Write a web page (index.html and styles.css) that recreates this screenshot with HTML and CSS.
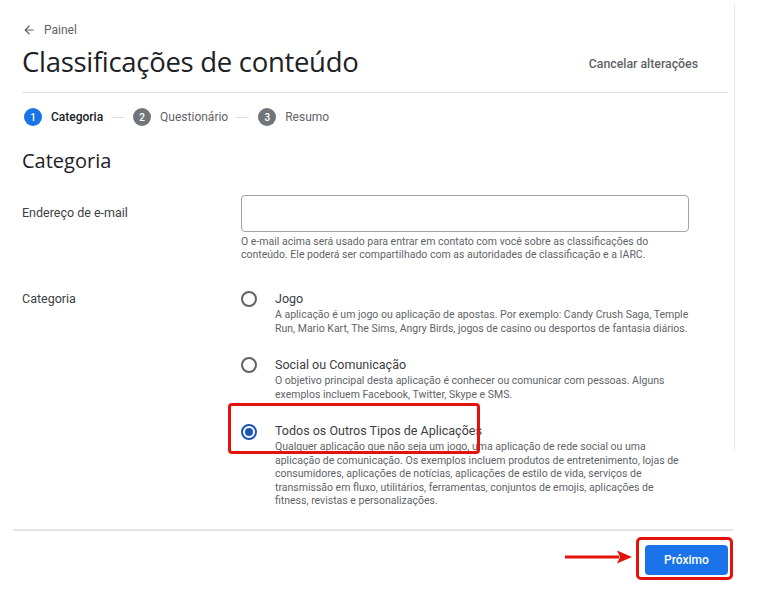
FILE: index.html
```html
<!DOCTYPE html>
<html lang="pt">
<head>
<meta charset="utf-8">
<title>Classificações de conteúdo</title>
<link rel="stylesheet" href="styles.css">
</head>
<body>
<div class="shell">
  <main class="main">
    <a class="back" href="#"><svg class="back-icon" width="14" height="14" viewBox="0 0 24 24"><path d="M20 11H7.830l5.59-5.59L12 4l-8 8 8 8 1.41-1.41L7.83 13H20v-2z" fill="#5f6368"/></svg><span>Painel</span></a>
    <header class="header">
      <h1 class="title">Classificações de conteúdo</h1>
      <button class="cancel">Cancelar alterações</button>
    </header>
    <ol class="stepper">
      <li class="step step-active"><span class="step-num">1</span><span class="step-label">Categoria</span></li>
      <li class="step-line"></li>
      <li class="step"><span class="step-num">2</span><span class="step-label">Questionário</span></li>
      <li class="step-line"></li>
      <li class="step"><span class="step-num">3</span><span class="step-label">Resumo</span></li>
    </ol>
    <h2 class="section-title">Categoria</h2>
    <div class="form-row">
      <div class="row-label row-label-center">Endereço de e-mail</div>
      <div class="row-field">
        <div class="input"></div>
        <p class="help">O e-mail acima será usado para entrar em contato com você sobre as classificações do conteúdo. Ele poderá ser compartilhado com as autoridades de classificação e a IARC.</p>
      </div>
    </div>
    <div class="form-row form-row-cat">
      <div class="row-label">Categoria</div>
      <div class="row-field options">
        <div class="option">
          <span class="radio"></span>
          <div class="option-text">
            <div class="option-title">Jogo</div>
            <div class="option-desc">A aplicação é um jogo ou aplicação de apostas. Por exemplo: Candy Crush Saga, Temple Run, Mario Kart, The Sims, Angry Birds, jogos de casino ou desportos de fantasia diários.</div>
          </div>
        </div>
        <div class="option">
          <span class="radio"></span>
          <div class="option-text">
            <div class="option-title">Social ou Comunicação</div>
            <div class="option-desc">O objetivo principal desta aplicação é conhecer ou comunicar com pessoas. Alguns exemplos incluem Facebook, Twitter, Skype e SMS.</div>
          </div>
        </div>
        <div class="option option-selected">
          <span class="radio radio-on"><span class="radio-dot"></span></span>
          <div class="option-text">
            <div class="option-title">Todos os Outros Tipos de Aplicações</div>
            <div class="option-desc">Qualquer aplicação que não seja um jogo, uma aplicação de rede social ou uma aplicação de comunicação. Os exemplos incluem produtos de entretenimento, lojas de consumidores, aplicações de notícias, aplicações de estilo de vida, serviços de transmissão em fluxo, utilitários, ferramentas, conjuntos de emojis, aplicações de fitness, revistas e personalizações.</div>
          </div>
          <span class="highlight highlight-option"></span>
        </div>
      </div>
    </div>
  </main>
  <div class="rail"></div>
</div>
<footer class="footer">
  <svg class="arrow" width="68" height="16" viewBox="0 0 68 16"><path d="M0 8h54" stroke="#e3120b" stroke-width="3"/><path d="M52 1.5L67 8 52 14.5 55 8z" fill="#e3120b"/></svg>
  <div class="btn-frame"><button class="next">Próximo</button></div>
</footer>
</body>
</html>
```
FILE: styles.css
```css
* { box-sizing: border-box; }
html, body { margin: 0; padding: 0; background: #fff; }
body {
  font-family: Roboto, "Liberation Sans", Arial, sans-serif;
  color: #202124;
  width: 768px;
  height: 589px;
  overflow: hidden;
}
.shell { display: flex; align-items: flex-start; }
.main { width: 728px; padding: 22px 0 0 22px; }
.rail { width: 1px; height: 446px; margin: 4px 0 0 6px; background: #e6e6e6; }

.back {
  display: flex; align-items: center; gap: 8px;
  height: 16px; font-size: 12px; color: #5f6368; text-decoration: none;
}
.back-icon { display: block; }

.header {
  display: flex; align-items: center; justify-content: space-between;
  margin-top: 7px; padding: 0 30px 13px 0;
  border-bottom: 1px solid #e2e2e2;
}
.title {
  margin: 0; font-size: 27.5px; line-height: 34px; font-weight: 400;
  font-family: "Open Sans", Roboto, sans-serif; letter-spacing: -0.3px; color: #202124;
}
.cancel {
  border: 0; background: none; padding: 0; margin-top: 4px;
  font: 500 12.3px/16px Roboto, sans-serif; color: #5f6368;
}

.stepper {
  list-style: none; margin: 15px 0 0; padding: 0 0 0 2px;
  display: flex; align-items: center; height: 18px;
}
.step { display: flex; align-items: center; gap: 9px; }
.step-num {
  width: 18px; height: 18px; border-radius: 50%;
  background: #70757a; color: #fff;
  font-size: 10px; font-weight: 500;
  display: flex; align-items: center; justify-content: center;
}
.step-active .step-num { background: #1a73e8; }
.step-label { font-size: 12px; color: #5f6368; }
.step-active .step-label { color: #202124; font-weight: 500; }
.step-line { width: 13px; height: 1px; background: #dadce0; margin: 0 9px 0 8px; }

.section-title {
  margin: 22px 0 0; font-size: 20px; line-height: 26px; font-weight: 400;
  font-family: "Open Sans", Roboto, sans-serif; color: #202124;
}

.form-row { display: grid; grid-template-columns: 219px 448px; margin-top: 21px; }
.form-row-cat { margin-top: 30px; }
.row-label { font-size: 12.5px; line-height: 16px; color: #3c4043; }
.row-label-center { align-self: start; margin-top: 10px; }
.form-row-cat .row-label { margin-top: 0; }
.input { height: 37px; border: 1px solid #a0a4a8; border-radius: 4px; }
.help {
  margin: 4px 0 0; font-size: 10.5px; line-height: 12.5px; color: #5f6368;
}

.options { display: flex; flex-direction: column; gap: 22px; }
.option { position: relative; display: flex; align-items: flex-start; gap: 18px; }
.radio {
  position: relative; flex: none;
  width: 16px; height: 16px; margin-top: 0;
  border: 2px solid #5f6368; border-radius: 50%;
}
.radio-on { border-color: #1a56b8; }
.radio-on::before {
  content: ""; position: absolute; left: 50%; top: 50%;
  width: 32px; height: 32px; margin: -16px 0 0 -16px;
  border-radius: 50%; background: #e3ecfb; z-index: -1;
}
.radio-dot {
  position: absolute; left: 2px; top: 2px; width: 8px; height: 8px;
  border-radius: 50%; background: #1a56b8;
}
.option-selected .radio { margin-top: 1px; }
.option-text { width: 414px; }
.option-title { font-size: 12.5px; line-height: 16px; color: #3c4043; }
.option-desc { margin-top: 1px; font-size: 10.5px; line-height: 13.5px; color: #5f6368; }

.highlight {
  position: absolute; border: 3px solid #e3120b; border-radius: 4px; pointer-events: none;
}
.highlight-option { left: -13px; top: -20px; width: 252px; height: 51px; }

.footer {
  margin: 21px 0 0 13px; width: 720px;
  border-top: 2px solid #e4e4e4;
  display: flex; align-items: center; justify-content: flex-end;
  padding-top: 6px;
}
.arrow { display: block; margin-right: 3px; margin-top: -2px; }
.btn-frame {
  border: 3px solid #e3120b; border-radius: 5px;
  padding: 5px 2px 2px 6px;
}
.next {
  display: block; width: 83px; height: 30px; border: 0; border-radius: 4px;
  background: #1a73e8; color: #fff;
  font: 500 12px Roboto, sans-serif;
}
```
